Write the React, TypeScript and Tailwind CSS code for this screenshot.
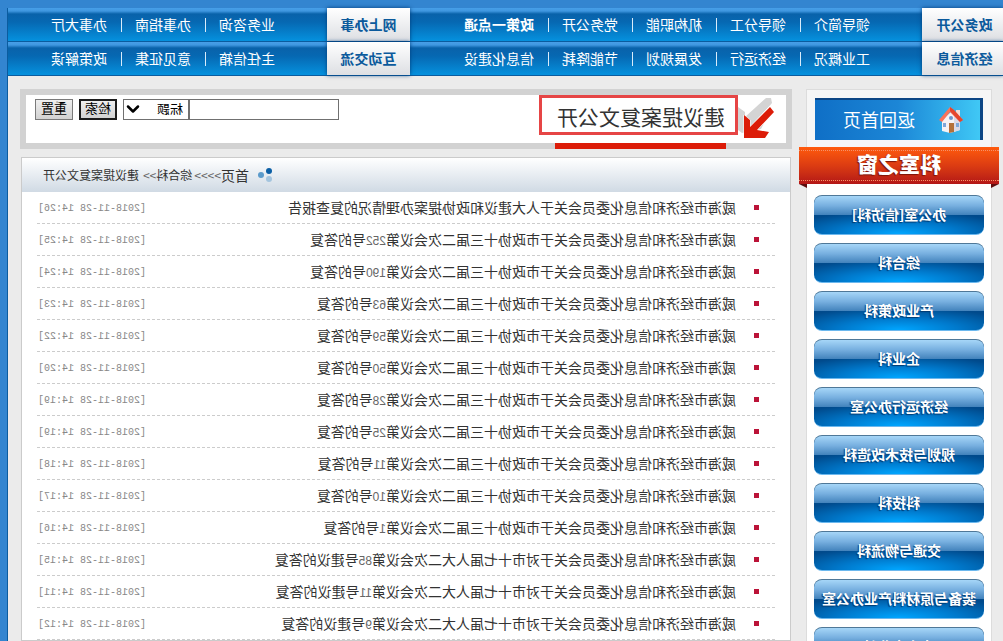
import React from "react";
import { ChevronDown } from "lucide-react";

type NavGroup = { title: string; links: string[] };

const navRows: NavGroup[][] = [
  [
    { title: "政务公开", links: ["领导简介", "领导分工", "机构职能", "党务公开", "政策一点通"] },
    { title: "网上办事", links: ["业务咨询", "办事指南", "办事大厅"] },
  ],
  [
    { title: "经济信息", links: ["工业概况", "经济运行", "发展规划", "节能降耗", "信息化建设"] },
    { title: "互动交流", links: ["主任信箱", "意见征集", "政策解读"] },
  ],
];

const departments = [
  "办公室[信访科]",
  "综合科",
  "产业政策科",
  "企业科",
  "经济运行办公室",
  "规划与技术改造科",
  "科技科",
  "交通与物流科",
  "装备与原材料产业办公室",
  "中小企业科",
];

const cppcc = "威海市经济和信息化委员会关于市政协十三届二次会议第";
const congress = "威海市经济和信息化委员会关于对市十七届人大二次会议第";

const articles = [
  { before: "威海市经济和信息化委员会关于人大建议和政协提案办理情况的复查报告", no: "", after: "", time: "14:26" },
  { before: cppcc, no: "252", after: "号的答复", time: "14:25" },
  { before: cppcc, no: "190", after: "号的答复", time: "14:24" },
  { before: cppcc, no: "63", after: "号的答复", time: "14:23" },
  { before: cppcc, no: "59", after: "号的答复", time: "14:22" },
  { before: cppcc, no: "50", after: "号的答复", time: "14:20" },
  { before: cppcc, no: "28", after: "号的答复", time: "14:19" },
  { before: cppcc, no: "25", after: "号的答复", time: "14:19" },
  { before: cppcc, no: "11", after: "号的答复", time: "14:18" },
  { before: cppcc, no: "10", after: "号的答复", time: "14:17" },
  { before: cppcc, no: "1", after: "号的答复", time: "14:16" },
  { before: congress, no: "85", after: "号建议的答复", time: "14:15" },
  { before: congress, no: "11", after: "号建议的答复", time: "14:11" },
  { before: congress, no: "9", after: "号建议的答复", time: "14:12" },
];

const NavRow = ({ groups }: { groups: NavGroup[] }) => (
  <div className="flex h-[34px] border-b border-[#0b5c9f] bg-[linear-gradient(#479fe8_0px,#3f97e0_3px,#0962aa_6px,#0668b2_14px,#0591de_33px)]">
    {groups.map((group, i) => (
      <div key={group.title} className={i === 0 ? "flex w-[593px]" : "flex flex-1"}>
        <h2
          className={`${i === 0 ? "w-[81px] pr-1" : "w-[83px]"} flex shrink-0 items-center justify-center bg-linear-to-b from-white to-[#dddfe3] pb-0.5 text-sm font-bold text-[#0b5a9c] shadow-[0_0_4px_#003c78]`}
        >
          {group.title}
        </h2>
        <ul className="ml-[52px] flex items-center pb-0.5 text-sm text-white">
          {group.links.map((link, n) => (
            <li key={link} className="flex items-center">
              {n > 0 && <span className="mx-[13px] mt-0.5 h-[14px] w-px bg-[#d9ecfb]" />}
              <a href="#" className={link === "政策一点通" ? "ml-px font-bold" : n > 0 ? "ml-px" : ""}>
                {link}
              </a>
            </li>
          ))}
        </ul>
      </div>
    ))}
  </div>
);

const HouseIcon = () => (
  <svg width="24" height="28" viewBox="0 0 24 28">
    <path d="M3 13 12 6l9 8v11l-8 2-10-3z" fill="#f6f2f4" />
    <path d="m3 14 6-7v19l-6-2z" fill="#dcd9e6" />
    <path d="M3 4h4v6L3 13z" fill="#f3dcd4" />
    <path d="M13 1 24 14l-3 2-8-10L3 16l-3-2L9 4z" fill="#f9735a" />
    <path d="M13 1 9 4 0 14l3 2L13 5z" fill="#e5452c" />
    <path d="M9 17h5v10l-5-1z" fill="#b4703a" />
    <path d="M17 17h3v4h-3zM4 17h3v4H4z" fill="#7ea6d8" />
    <circle cx="12" cy="12" r="2" fill="#6f95c9" />
  </svg>
);

const ArrowIcon = () => (
  <svg width="38" height="42" viewBox="0 0 38 42">
    <path d="M5 0 4 5l14 16-6 4 3 6 19 4 4-3V9l-7 5v5L10 0z" fill="#d4d4d4" />
    <path d="M6 8 1 14l18 18-12 2 4 6h21V17l-6 5v7z" fill="#fff" stroke="#fff" strokeWidth="1" />
    <path d="M6 9 2 14l17 18-12 2 4 6h21V17l-6 5v7z" fill="#dc1c08" />
  </svg>
);

const Sidebar = () => (
  <aside className="w-[186px] shrink-0 border border-[#dcdcdc] bg-white">
    <div className="bg-[#f6f6f6] p-2 pb-[7px]">
      <a
        href="#"
        className="flex h-[42px] items-center border-t-2 border-l-3 border-[#0c4584] bg-linear-to-r from-[#40c8f5] via-[#1c86d6] to-[#0f6fc6] pl-[17px] text-lg text-white"
      >
        <HouseIcon />
        <span className="ml-[24px] pb-0.5">返回首页</span>
      </a>
    </div>
    <div className="-mx-2">
      <h2 className="flex h-[37px] items-center justify-center bg-linear-to-b from-[#ff5a0c] via-[#dc3c12] to-[#b31616] text-[21px] font-black text-white">
        <span className="flex h-[31px] w-full items-center justify-center border-y border-dotted border-[#f5906a] pb-1 leading-none [text-shadow:1px_1px_1px_#7c1408]">
          科室之窗
        </span>
      </h2>
      <div className="flex justify-between">
        <svg width="8" height="4" viewBox="0 0 8 4">
          <path d="M0 0h8v4z" fill="#5c0d0d" />
        </svg>
        <svg width="8" height="4" viewBox="0 0 8 4">
          <path d="M0 0h8L0 4z" fill="#5c0d0d" />
        </svg>
      </div>
    </div>
    <nav className="flex flex-col gap-2 px-[7px] pt-[7px]">
      {departments.map((name) => (
        <a
          key={name}
          href="#"
          className="flex h-[40px] items-center justify-center rounded-lg border-t border-b border-t-[#4f7898] border-b-[#6cb8ee] bg-[linear-gradient(#a6d6f8_0%,#78b0e0_25%,#4484bd_49%,transparent_51%),radial-gradient(ellipse_70%_60%_at_50%_100%,#00a6ff_0%,#0079cc_50%,#004a8c_100%)] pb-0.5 text-sm font-bold whitespace-nowrap text-white [text-shadow:1px_1px_1px_#003a70]"
        >
          {name}
        </a>
      ))}
    </nav>
  </aside>
);

const SearchPanel = () => (
  <section className="flex h-[60px] items-start border-6 border-[#d2d2d2] bg-white pr-[9px]">
    <div className="ml-[10px] pt-[3px]">
      <ArrowIcon />
    </div>
    <div className="relative h-[54px] w-[199px] shrink-0">
      <h1 className="flex h-[40px] items-center border-3 border-[#e64545] pt-1 pl-[10px] text-[21px] text-[#333]">
        建议提案复文公开
      </h1>
      <span className="absolute bottom-0 left-[12px] h-[6px] w-[171px] bg-[#dc1c08]" />
    </div>
    <form className="mt-[4px] ml-auto flex h-[21px] text-[13px] text-black" onSubmit={(e) => e.preventDefault()}>
      <input aria-label="关键字" className="w-[150px] border border-[#707070] bg-white px-1" />
      <div className="relative w-[66px]">
        <select
          aria-label="检索范围"
          className="h-full w-full appearance-none border border-[#707070] bg-white pb-0.5 pl-[5px] leading-none"
        >
          <option>标题</option>
        </select>
        <ChevronDown className="pointer-events-none absolute top-0 right-0 size-5" strokeWidth={3} />
      </div>
      <button className="ml-[6px] w-[38px] border-2 border-[#1c1c1c] bg-linear-to-b from-[#efefef] to-[#d2d2d2] pb-1 leading-none">
        检索
      </button>
      <button
        type="reset"
        className="ml-[6px] w-[38px] border border-[#7a7a7a] bg-linear-to-b from-[#efefef] to-[#d2d2d2] pb-1 leading-none"
      >
        重置
      </button>
    </form>
  </section>
);

const ArticlePanel = () => (
  <section className="mx-px mt-2 border border-[#cbcbcb] bg-white">
    <div className="flex h-[34px] items-center justify-end bg-linear-to-b from-white to-[#d0dae4] pr-[21px] text-xs text-[#333]">
      <svg width="16" height="14" viewBox="0 0 16 14" className="mr-[8px]">
        <circle cx="4" cy="3" r="3" fill="#0b5fa5" />
        <circle cx="12" cy="7" r="3" fill="#5b9bcb" />
        <circle cx="4" cy="11" r="3" fill="#a3c4de" />
      </svg>
      <a href="#" className="text-sm">
        首页
      </a>
      <span className="text-[#666]">&gt;&gt;&gt;&gt;</span>
      <a href="#" className="ml-[2px]">
        综合科
      </a>
      <span className="text-[#666]">&gt;&gt;</span>
      <span className="ml-[4px]">建议提案复文公开</span>
    </div>
    <ul className="mx-[15px]">
      {articles.map((item, i) => (
        <li key={i} className="flex h-[32px] items-center border-b border-dashed border-[#ccc] pr-px pl-4">
          <span className="size-[5px] bg-[#bb1338]" />
          <a href="#" className="ml-[18px] pb-0.5 text-sm whitespace-nowrap text-[#333]">
            {item.before}
            <span className="font-['Liberation_Sans'] text-xs text-[#666]">{item.no}</span>
            {item.after}
          </a>
          <time className="ml-auto pt-0.5 font-['Liberation_Mono'] text-[10px] text-[#888]">[2018-11-28 {item.time}]</time>
        </li>
      ))}
    </ul>
  </section>
);

const App = () => {
  return (
    <div className="h-screen -scale-x-100 overflow-hidden bg-[#3385d0] pt-2 pr-[7px] font-['Noto_Sans_CJK_SC',sans-serif]">
      <div className="min-h-full border-r border-[#0b5c9f] bg-[#ebebeb]">
        <header>
          {navRows.map((groups, i) => (
            <NavRow key={i} groups={groups} />
          ))}
        </header>
        <div className="flex gap-[14px] pt-[13px] pr-[12px] pl-[11px]">
          <Sidebar />
          <main className="min-w-0 flex-1">
            <SearchPanel />
            <ArticlePanel />
          </main>
        </div>
      </div>
    </div>
  );
};

export default App;
